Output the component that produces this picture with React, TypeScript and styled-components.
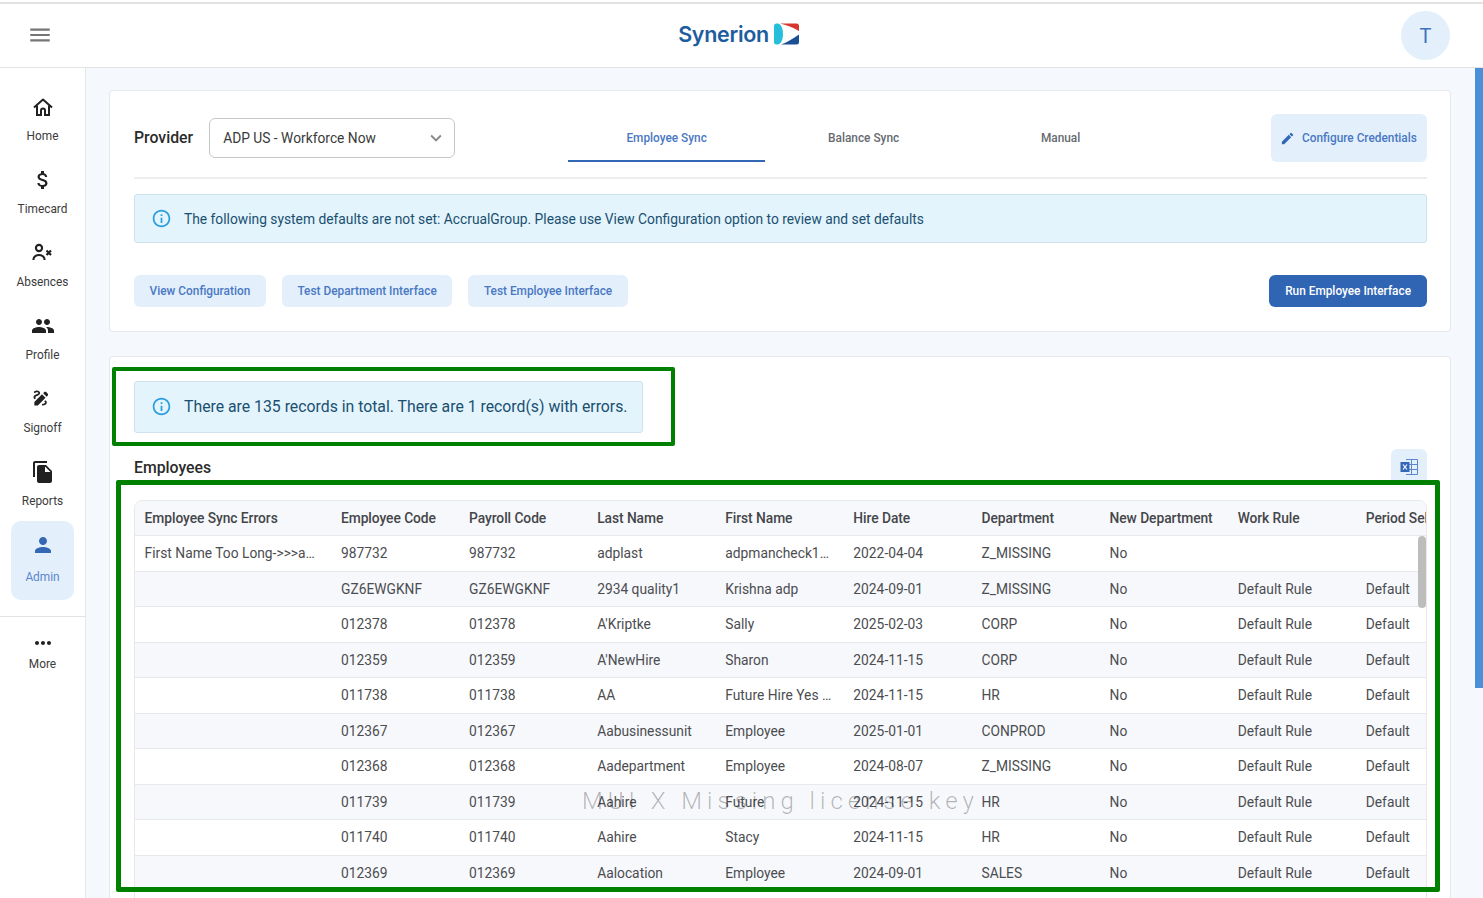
import styled, { createGlobalStyle } from "styled-components";
import {
  MdAttachMoney,
  MdDraw,
  MdEdit,
  MdFileCopy,
  MdInfoOutline,
  MdKeyboardArrowDown,
  MdMenu,
  MdMoreHoriz,
  MdPeople,
  MdPerson,
} from "react-icons/md";

const GlobalStyle = createGlobalStyle`
  html, body {
    margin: 0;
    height: 100%;
    overflow: hidden;
    background: #fff;
  }
  * {
    box-sizing: border-box;
  }
  body {
    font-family: Roboto, "Liberation Sans", sans-serif;
  }
`;

const Page = styled.div`
  height: 898px;
  display: flex;
  flex-direction: column;
  padding-top: 2px;
  position: relative;
  overflow: hidden;
`;

const Header = styled.header`
  flex: 0 0 66px;
  display: grid;
  grid-template-columns: 1fr auto 1fr;
  align-items: center;
  padding: 0 33px 0 27px;
  background: #fff;
  border-top: 2px solid #e2e2e2;
  border-bottom: 1px solid #e2e2e2;
`;

const MenuButton = styled.div`
  display: flex;
  color: #757575;
  font-size: 26px;
  margin-top: -2px;
`;

const Logo = styled.div`
  display: flex;
  align-items: center;
  gap: 5px;
  margin-top: -3px;
`;

const LogoText = styled.span`
  font-family: Inter, sans-serif;
  font-size: 21.5px;
  font-weight: 600;
  letter-spacing: -0.3px;
  color: #1d5c9f;
`;

const Avatar = styled.div`
  justify-self: end;
  width: 49px;
  height: 49px;
  border-radius: 50%;
  background: #e3f0fb;
  color: #3f72bd;
  font-size: 20px;
  display: flex;
  align-items: center;
  justify-content: center;
`;

const Body = styled.div`
  flex: 1;
  display: flex;
  min-height: 0;
`;

const Sidebar = styled.nav`
  flex: 0 0 86px;
  background: #fff;
  border-right: 1px solid #e4e7ec;
  padding-top: 27px;
  display: flex;
  flex-direction: column;
`;

const NavList = styled.div`
  display: flex;
  flex-direction: column;
  align-items: center;
  gap: 24px;
`;

const NavItem = styled.div<{ $active?: boolean }>`
  width: 63px;
  display: flex;
  flex-direction: column;
  align-items: center;
  gap: ${(p) => (p.$active ? "12px" : "9px")};
  padding: ${(p) => (p.$active ? "12px 0 15px" : "0")};
  margin-top: ${(p) => (p.$active ? "-12px" : "0")};
  border-radius: 10px;
  background: ${(p) => (p.$active ? "#e3f0fb" : "transparent")};
  color: ${(p) => (p.$active ? "#3467b5" : "#212121")};
`;

const NavIcon = styled.div`
  height: 24px;
  font-size: 24px;
  display: flex;
  align-items: center;
  justify-content: center;
`;

const NavLabel = styled.span<{ $active?: boolean }>`
  font-size: 11.85px;
  line-height: 16px;
  white-space: nowrap;
  color: ${(p) => (p.$active ? "#5b86cc" : "#3c3c3c")};
`;

const SideDivider = styled.div`
  height: 1px;
  background: #e2e2e2;
  margin-top: 16px;
`;

const MoreItem = styled.div`
  display: flex;
  flex-direction: column;
  align-items: center;
  gap: 1px;
  padding-top: 14px;
  color: #212121;
`;

const SignoffIcon = styled(MdDraw)`
  font-size: 20px;
  margin: 0 4px 3px 0;
`;

const Main = styled.main`
  flex: 1;
  min-width: 0;
  background: #f5f8fc;
  padding: 22px 32px 0 23px;
  display: flex;
  flex-direction: column;
  gap: 24px;
`;

const Card = styled.section`
  position: relative;
  background: #fff;
  border: 1px solid #e6e8ec;
  border-radius: 4px;
  padding: 23px 23px 24px 24px;
`;

const TopRow = styled.div`
  height: 65px;
  display: flex;
  align-items: flex-start;
  border-bottom: 2px solid #eeeeee;
`;

const ProviderLabel = styled.span`
  font-size: 15.8px;
  font-weight: 500;
  line-height: 48px;
  color: #2b2b2b;
  margin-right: 16px;
`;

const Select = styled.div`
  width: 246px;
  height: 40px;
  margin-top: 4px;
  display: flex;
  align-items: center;
  justify-content: space-between;
  padding: 0 7px 0 13px;
  border: 1px solid #c8c8c8;
  border-radius: 6px;
  font-size: 13.8px;
  color: #3a3a3a;

  svg {
    color: #8a8a8a;
    font-size: 22px;
  }
`;

const Tabs = styled.div`
  display: flex;
  margin-left: 113px;
`;

const Tab = styled.div<{ $active?: boolean }>`
  width: 197px;
  height: 48px;
  padding-top: 1px;
  display: flex;
  align-items: center;
  justify-content: center;
  font-size: 11.85px;
  font-weight: 500;
  color: ${(p) => (p.$active ? "#4a78c4" : "#666a70")};
  border-bottom: 2px solid ${(p) => (p.$active ? "#3467b5" : "transparent")};
`;

const ConfigureButton = styled.div`
  margin-left: auto;
  width: 156px;
  height: 48px;
  display: flex;
  align-items: center;
  gap: 7px;
  padding-left: 9px;
  border-radius: 6px;
  background: #e3f0fb;
  color: #4a78c4;
  font-size: 11.85px;
  font-weight: 500;
  white-space: nowrap;

  svg {
    font-size: 15px;
    color: #3467b5;
  }
`;

const Alert = styled.div<{ $fit?: boolean; $large?: boolean }>`
  width: ${(p) => (p.$fit ? "509px" : "auto")};
  height: ${(p) => (p.$fit ? "52px" : "49px")};
  margin-top: ${(p) => (p.$fit ? "1px" : "15px")};
  display: flex;
  align-items: center;
  gap: 12px;
  padding: 0 0 ${(p) => (p.$fit ? "2px" : "0")} 16px;
  background: #e3f4fc;
  border: 1px solid #cfe1ec;
  border-radius: 3px;
  color: #1a4f70;
  font-size: ${(p) => (p.$large ? "15.8px" : "13.8px")};
  white-space: nowrap;

  svg {
    flex: none;
    font-size: 21px;
    color: #2a9ee0;
  }
`;

const ActionRow = styled.div`
  margin-top: 32px;
  display: flex;
  gap: 16px;
`;

const ActionButton = styled.div<{ $primary?: boolean }>`
  height: 32px;
  padding: 0 ${(p) => (p.$primary ? "16px" : "15.6px")};
  margin-left: ${(p) => (p.$primary ? "auto" : "0")};
  display: flex;
  align-items: center;
  border-radius: 6px;
  font-size: 11.85px;
  font-weight: 500;
  background: ${(p) => (p.$primary ? "#2f65b3" : "#e3f0fb")};
  color: ${(p) => (p.$primary ? "#fff" : "#4a78c4")};
`;

const LowerCard = styled(Card)`
  flex: 1;
  padding-bottom: 0;
`;

const TitleRow = styled.div`
  margin-top: 16px;
  height: 36px;
  display: flex;
  align-items: center;
  justify-content: space-between;
`;

const SectionTitle = styled.h2`
  margin: 0;
  font-size: 15.8px;
  font-weight: 500;
  color: #2b2b2b;
`;

const ExcelButton = styled.div`
  width: 36px;
  height: 36px;
  border-radius: 6px;
  background: #e3f0fb;
  display: flex;
  align-items: center;
  justify-content: center;
`;

const Table = styled.div`
  position: relative;
  margin-top: 15px;
  height: 420px;
  border: 1px solid #e6e8ec;
  border-radius: 8px;
  overflow: hidden;
`;

const Row = styled.div<{ $head?: boolean; $striped?: boolean }>`
  display: grid;
  grid-template-columns: 196.4px repeat(9, 128.1px);
  height: ${(p) => (p.$head ? "35px" : "35.5px")};
  align-items: center;
  background: ${(p) => (p.$head || p.$striped ? "#f7f8fc" : "#fff")};
  border-bottom: 1px solid #e6e8ec;
`;

const Cell = styled.div<{ $head?: boolean }>`
  padding: 0 ${(p) => (p.$head ? "0" : "10px")} 0 9.6px;
  font-size: 13.8px;
  font-weight: ${(p) => (p.$head ? 500 : 400)};
  letter-spacing: ${(p) => (p.$head ? "-0.06px" : "0")};
  color: ${(p) => (p.$head ? "#444649" : "#4b4d50")};
  white-space: nowrap;
  overflow: hidden;
  text-overflow: ${(p) => (p.$head ? "clip" : "ellipsis")};
`;

const ScrollThumb = styled.div`
  position: absolute;
  top: 35px;
  right: 0;
  width: 8px;
  height: 72px;
  border-radius: 4px;
  background: #bdbdbd;
`;

const Watermark = styled.div`
  position: absolute;
  left: 0;
  right: 0;
  top: 286px;
  text-align: center;
  font-size: 24px;
  font-weight: 300;
  letter-spacing: 5px;
  color: rgba(0, 0, 0, 0.28);
  white-space: nowrap;
  pointer-events: none;
`;

const PageScrollbar = styled.div`
  position: absolute;
  top: 68px;
  right: 0;
  width: 8px;
  height: 620px;
  background: #4a90d9;
`;

const Highlight = styled.div<{ $wide?: boolean }>`
  position: absolute;
  left: ${(p) => (p.$wide ? "6px" : "2px")};
  top: ${(p) => (p.$wide ? "123px" : "10px")};
  width: ${(p) => (p.$wide ? "1324px" : "563px")};
  height: ${(p) => (p.$wide ? "412px" : "79px")};
  border: ${(p) => (p.$wide ? "5px" : "4px")} solid #008000;
  border-radius: 2px;
  pointer-events: none;
`;

const HomeIcon = () => (
  <svg width="24" height="24" viewBox="0 0 24 24" fill="none" stroke="currentColor" strokeWidth="2">
    <path d="M3 12.5 12 4.5l9 8" strokeLinejoin="round" />
    <path d="M6 10.5V20h4v-4.5a2 2 0 0 1 4 0V20h4v-9.5" />
  </svg>
);

const AbsenceIcon = () => (
  <svg width="24" height="24" viewBox="0 0 24 24" fill="none" stroke="currentColor" strokeWidth="2.1">
    <circle cx="8" cy="7" r="3.1" />
    <path d="M2.500 19v-1c0-2.500 3-4 5.500-4s5.500 1.500 5.500 4v1" />
    <path d="m15.500 9.500 4.500 4.500m0-4.500-4.500 4.500" strokeWidth="2.200" />
  </svg>
);

const ExcelIcon = () => (
  <svg width="18" height="16" viewBox="0 0 18 16">
    <path d="M6 .5h11.500v15H6M6 5.500h11.500M6 10.500h11.500M11.500 .5v15" fill="none" stroke="#5a86cc" strokeWidth="1" />
    <rect x="0.500" y="3" width="9" height="10" fill="#3467b5" />
    <path d="m3 5.500 4 5m0-5-4 5" stroke="#fff" strokeWidth="1.200" />
  </svg>
);

const LogoMark = () => (
  <svg width="25" height="22" viewBox="0 0 25 22">
    <path d="M2.500.5H4C8 1.500 9 7 9 11s-1 9.500-5 10.500H2.500A2.500 2.500 0 0 1 0 19V3A2.500 2.500 0 0 1 2.500.5z" fill="#25bfdb" />
    <path d="M6 .5h16.500A2.500 2.500 0 0 1 25 3v5C18 4 12 2 6 .5z" fill="#d8352f" />
    <path d="M25 11.500V19a2.500 2.500 0 0 1-2.500 2.500H7c6-2 12-6 18-10z" fill="#1a4f96" />
  </svg>
);

const NAV_ITEMS = [
  { label: "Home", icon: <HomeIcon /> },
  { label: "Timecard", icon: <MdAttachMoney /> },
  { label: "Absences", icon: <AbsenceIcon /> },
  { label: "Profile", icon: <MdPeople /> },
  { label: "Signoff", icon: <SignoffIcon /> },
  { label: "Reports", icon: <MdFileCopy /> },
];

const COLUMNS = [
  "Employee Sync Errors",
  "Employee Code",
  "Payroll Code",
  "Last Name",
  "First Name",
  "Hire Date",
  "Department",
  "New Department",
  "Work Rule",
  "Period Selection",
];

const ROWS = [
  ["First Name Too Long->>>adpmancheck1234", "987732", "987732", "adplast", "adpmancheck12345", "2022-04-04", "Z_MISSING", "No", "", ""],
  ["", "GZ6EWGKNF", "GZ6EWGKNF", "2934 quality1", "Krishna adp", "2024-09-01", "Z_MISSING", "No", "Default Rule", "Default"],
  ["", "012378", "012378", "A'Kriptke", "Sally", "2025-02-03", "CORP", "No", "Default Rule", "Default"],
  ["", "012359", "012359", "A'NewHire", "Sharon", "2024-11-15", "CORP", "No", "Default Rule", "Default"],
  ["", "011738", "011738", "AA", "Future Hire Yes No Maybe", "2024-11-15", "HR", "No", "Default Rule", "Default"],
  ["", "012367", "012367", "Aabusinessunit", "Employee", "2025-01-01", "CONPROD", "No", "Default Rule", "Default"],
  ["", "012368", "012368", "Aadepartment", "Employee", "2024-08-07", "Z_MISSING", "No", "Default Rule", "Default"],
  ["", "011739", "011739", "Aahire", "Future", "2024-11-15", "HR", "No", "Default Rule", "Default"],
  ["", "011740", "011740", "Aahire", "Stacy", "2024-11-15", "HR", "No", "Default Rule", "Default"],
  ["", "012369", "012369", "Aalocation", "Employee", "2024-09-01", "SALES", "No", "Default Rule", "Default"],
];

export default function App() {
  return (
    <Page>
      <GlobalStyle />
      <Header>
        <MenuButton>
          <MdMenu />
        </MenuButton>
        <Logo>
          <LogoText>Synerion</LogoText>
          <LogoMark />
        </Logo>
        <Avatar>T</Avatar>
      </Header>
      <Body>
        <Sidebar>
          <NavList>
            {NAV_ITEMS.map((item) => (
              <NavItem key={item.label}>
                <NavIcon>{item.icon}</NavIcon>
                <NavLabel>{item.label}</NavLabel>
              </NavItem>
            ))}
            <NavItem $active>
              <NavIcon>
                <MdPerson />
              </NavIcon>
              <NavLabel $active>Admin</NavLabel>
            </NavItem>
          </NavList>
          <SideDivider />
          <MoreItem>
            <NavIcon>
              <MdMoreHoriz />
            </NavIcon>
            <NavLabel>More</NavLabel>
          </MoreItem>
        </Sidebar>
        <Main>
          <Card>
            <TopRow>
              <ProviderLabel>Provider</ProviderLabel>
              <Select>
                ADP US - Workforce Now
                <MdKeyboardArrowDown />
              </Select>
              <Tabs>
                <Tab $active>Employee Sync</Tab>
                <Tab>Balance Sync</Tab>
                <Tab>Manual</Tab>
              </Tabs>
              <ConfigureButton>
                <MdEdit />
                Configure Credentials
              </ConfigureButton>
            </TopRow>
            <Alert>
              <MdInfoOutline />
              The following system defaults are not set: AccrualGroup. Please use View Configuration option to review and set defaults
            </Alert>
            <ActionRow>
              <ActionButton>View Configuration</ActionButton>
              <ActionButton>Test Department Interface</ActionButton>
              <ActionButton>Test Employee Interface</ActionButton>
              <ActionButton $primary>Run Employee Interface</ActionButton>
            </ActionRow>
          </Card>
          <LowerCard>
            <Alert $fit $large>
              <MdInfoOutline />
              There are 135 records in total. There are 1 record(s) with errors.
            </Alert>
            <TitleRow>
              <SectionTitle>Employees</SectionTitle>
              <ExcelButton>
                <ExcelIcon />
              </ExcelButton>
            </TitleRow>
            <Table>
              <Row $head>
                {COLUMNS.map((col) => (
                  <Cell $head key={col}>
                    {col}
                  </Cell>
                ))}
              </Row>
              {ROWS.map((row, i) => (
                <Row key={row[1]} $striped={i % 2 === 1}>
                  {row.map((value, j) => (
                    <Cell key={j}>{value}</Cell>
                  ))}
                </Row>
              ))}
              <ScrollThumb />
              <Watermark>MUI X Missing license key</Watermark>
            </Table>
            <Highlight />
            <Highlight $wide />
          </LowerCard>
        </Main>
      </Body>
      <PageScrollbar />
    </Page>
  );
}
